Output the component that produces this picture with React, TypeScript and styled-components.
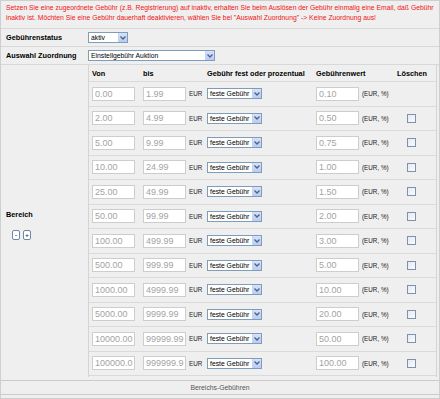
import styled, { createGlobalStyle } from 'styled-components'

const GlobalStyle = createGlobalStyle`
	html, body {
		margin: 0;
		padding: 0;
		background: #efefef;
	}
	* {
		box-sizing: border-box;
	}
`

const Frame = styled.div`
	width: 440px;
	height: 399px;
	background: #efefef;
	border: 1px solid #cfcfcf;
	font-family: 'Liberation Sans', Arial, sans-serif;
	color: #000;
	overflow: hidden;
`

const Notice = styled.div`
	padding: 2px 5px 5px 5px;
	height: 28px;
	color: #f01414;
	font-size: 6.8px;
	line-height: 10px;
	border-bottom: 1px solid #d8d8d8;
	white-space: nowrap;
`

const FormRow = styled.div`
	display: grid;
	grid-template-columns: 87px 1fr;
	align-items: center;
	height: 18px;
	border-bottom: 1px solid #d8d8d8;
`

const Label = styled.div`
	padding-left: 5px;
	font-size: 7.3px;
	font-weight: 700;
`

const FakeSelect = styled.div<{ w: number; h?: number }>`
	display: flex;
	align-items: stretch;
	width: ${p => p.w}px;
	height: ${p => p.h ?? 11}px;
	border: 1px solid #7f9db9;
	background: #fff;
	font-size: 6.8px;
	line-height: ${p => (p.h ?? 11) - 2}px;
`

const SelectText = styled.span`
	flex: 1;
	padding-left: 2px;
	white-space: nowrap;
	overflow: hidden;
`

const SelectArrow = styled.span`
	width: 9px;
	display: flex;
	align-items: center;
	justify-content: center;
	background: linear-gradient(#d6e2fb, #b9ccf6);
	border-left: 1px solid #c6d4f0;
`

const RangeSection = styled.div`
	display: grid;
	grid-template-columns: 87px 1fr;
	height: 316px;
	border-bottom: 1px solid #cbcbcb;
`

const RangeLabelCell = styled.div`
	display: flex;
	flex-direction: column;
	justify-content: center;
	gap: 11px;
	padding-left: 4px;
	padding-top: 4px;
`

const StepButtons = styled.div`
	display: flex;
	gap: 3px;
	padding-left: 7px;
`

const StepButton = styled.span`
	width: 8px;
	height: 10px;
	border: 1px solid #6f86aa;
	border-radius: 2px;
	background: #fff;
	font-size: 6px;
	font-weight: 700;
	line-height: 8px;
	text-align: center;
	color: #333;
`

const RangeTable = styled.div`
	border-left: 1px solid #d4d4d4;
	border-right: 1px solid #d4d4d4;
	margin-right: 2px;
	margin-bottom: 3px;
`

const TableRow = styled.div<{ header?: boolean }>`
	display: grid;
	grid-template-columns: 51px 64px 109px 81px 1fr;
	align-items: center;
	height: ${p => (p.header ? 17 : 24.5)}px;
	border-bottom: 1px solid #dadada;
`

const HeadCell = styled.div`
	padding-left: 3px;
	font-size: 7.3px;
	font-weight: 700;
	white-space: nowrap;
`

const Cell = styled.div<{ center?: boolean }>`
	display: flex;
	align-items: center;
	gap: 3px;
	padding-left: ${p => (p.center ? '0' : '3px')};
	justify-content: ${p => (p.center ? 'center' : 'flex-start')};
	padding-right: ${p => (p.center ? '8px' : '0')};
`

const ValueBox = styled.div`
	width: 43px;
	height: 14px;
	border: 1px solid #cdcdcd;
	background: #fff;
	color: #a3a3a3;
	font-size: 9px;
	line-height: 12px;
	padding-left: 2px;
	white-space: nowrap;
	overflow: hidden;
`

const Unit = styled.span`
	font-size: 6.3px;
	color: #222;
	white-space: nowrap;
`

const CheckBox = styled.span`
	width: 9px;
	height: 9px;
	border: 1px solid #7d91b4;
	background: linear-gradient(135deg, #e6e9ee, #fbfbfb);
`

const Footer = styled.div`
	height: 14px;
	line-height: 13px;
	text-align: center;
	font-size: 6.8px;
	color: #555;
	border-bottom: 1px solid #cbcbcb;
`

const Chevron = () => (
	<svg width="6" height="4" viewBox="0 0 6 4">
		<polyline points="0.5,0.5 3,3 5.5,0.5" fill="none" stroke="#4d6185" strokeWidth="1.3" />
	</svg>
)

const Select = ({ w, h, text }: { w: number; h?: number; text: string }) => (
	<FakeSelect w={w} h={h}>
		<SelectText>{text}</SelectText>
		<SelectArrow>
			<Chevron />
		</SelectArrow>
	</FakeSelect>
)

const ranges = [
	['0.00', '1.99', '0.10'],
	['2.00', '4.99', '0.50'],
	['5.00', '9.99', '0.75'],
	['10.00', '24.99', '1.00'],
	['25.00', '49.99', '1.50'],
	['50.00', '99.99', '2.00'],
	['100.00', '499.99', '3.00'],
	['500.00', '999.99', '5.00'],
	['1000.00', '4999.99', '10.00'],
	['5000.00', '9999.99', '20.00'],
	['10000.00', '99999.99', '50.00'],
	['100000.0', '999999.9', '100.00'],
]

export default function App() {
	return (
		<>
			<GlobalStyle />
			<Frame>
				<Notice>
					Setzen Sie eine zugeordnete Gebühr (z.B. Registrierung) auf inaktiv, erhalten Sie beim Auslösen der Gebühr einmalig eine Email, daß Gebühr
					<br />
					inaktiv ist. Möchten Sie eine Gebühr dauerhaft deaktivieren, wählen Sie bei "Auswahl Zuordnung" -&gt; Keine Zuordnung aus!
				</Notice>
				<FormRow>
					<Label>Gebührenstatus</Label>
					<Select w={40} text="aktiv" />
				</FormRow>
				<FormRow>
					<Label>Auswahl Zuordnung</Label>
					<Select w={127} text="Einstellgebühr Auktion" />
				</FormRow>
				<RangeSection>
					<RangeLabelCell>
						<Label style={{ paddingLeft: 1 }}>Bereich</Label>
						<StepButtons>
							<StepButton>-</StepButton>
							<StepButton>+</StepButton>
						</StepButtons>
					</RangeLabelCell>
					<RangeTable>
						<TableRow header>
							<HeadCell>Von</HeadCell>
							<HeadCell>bis</HeadCell>
							<HeadCell>Gebühr fest oder prozentual</HeadCell>
							<HeadCell>Gebührenwert</HeadCell>
							<HeadCell>Löschen</HeadCell>
						</TableRow>
						{ranges.map((r, i) => (
							<TableRow key={i}>
								<Cell>
									<ValueBox>{r[0]}</ValueBox>
								</Cell>
								<Cell>
									<ValueBox>{r[1]}</ValueBox>
									<Unit>EUR</Unit>
								</Cell>
								<Cell>
									<Select w={55} text="feste Gebühr" />
								</Cell>
								<Cell>
									<ValueBox>{r[2]}</ValueBox>
									<Unit>(EUR, %)</Unit>
								</Cell>
								<Cell center>{i > 0 && <CheckBox />}</Cell>
							</TableRow>
						))}
					</RangeTable>
				</RangeSection>
				<Footer>Bereichs-Gebühren</Footer>
			</Frame>
		</>
	)
}
